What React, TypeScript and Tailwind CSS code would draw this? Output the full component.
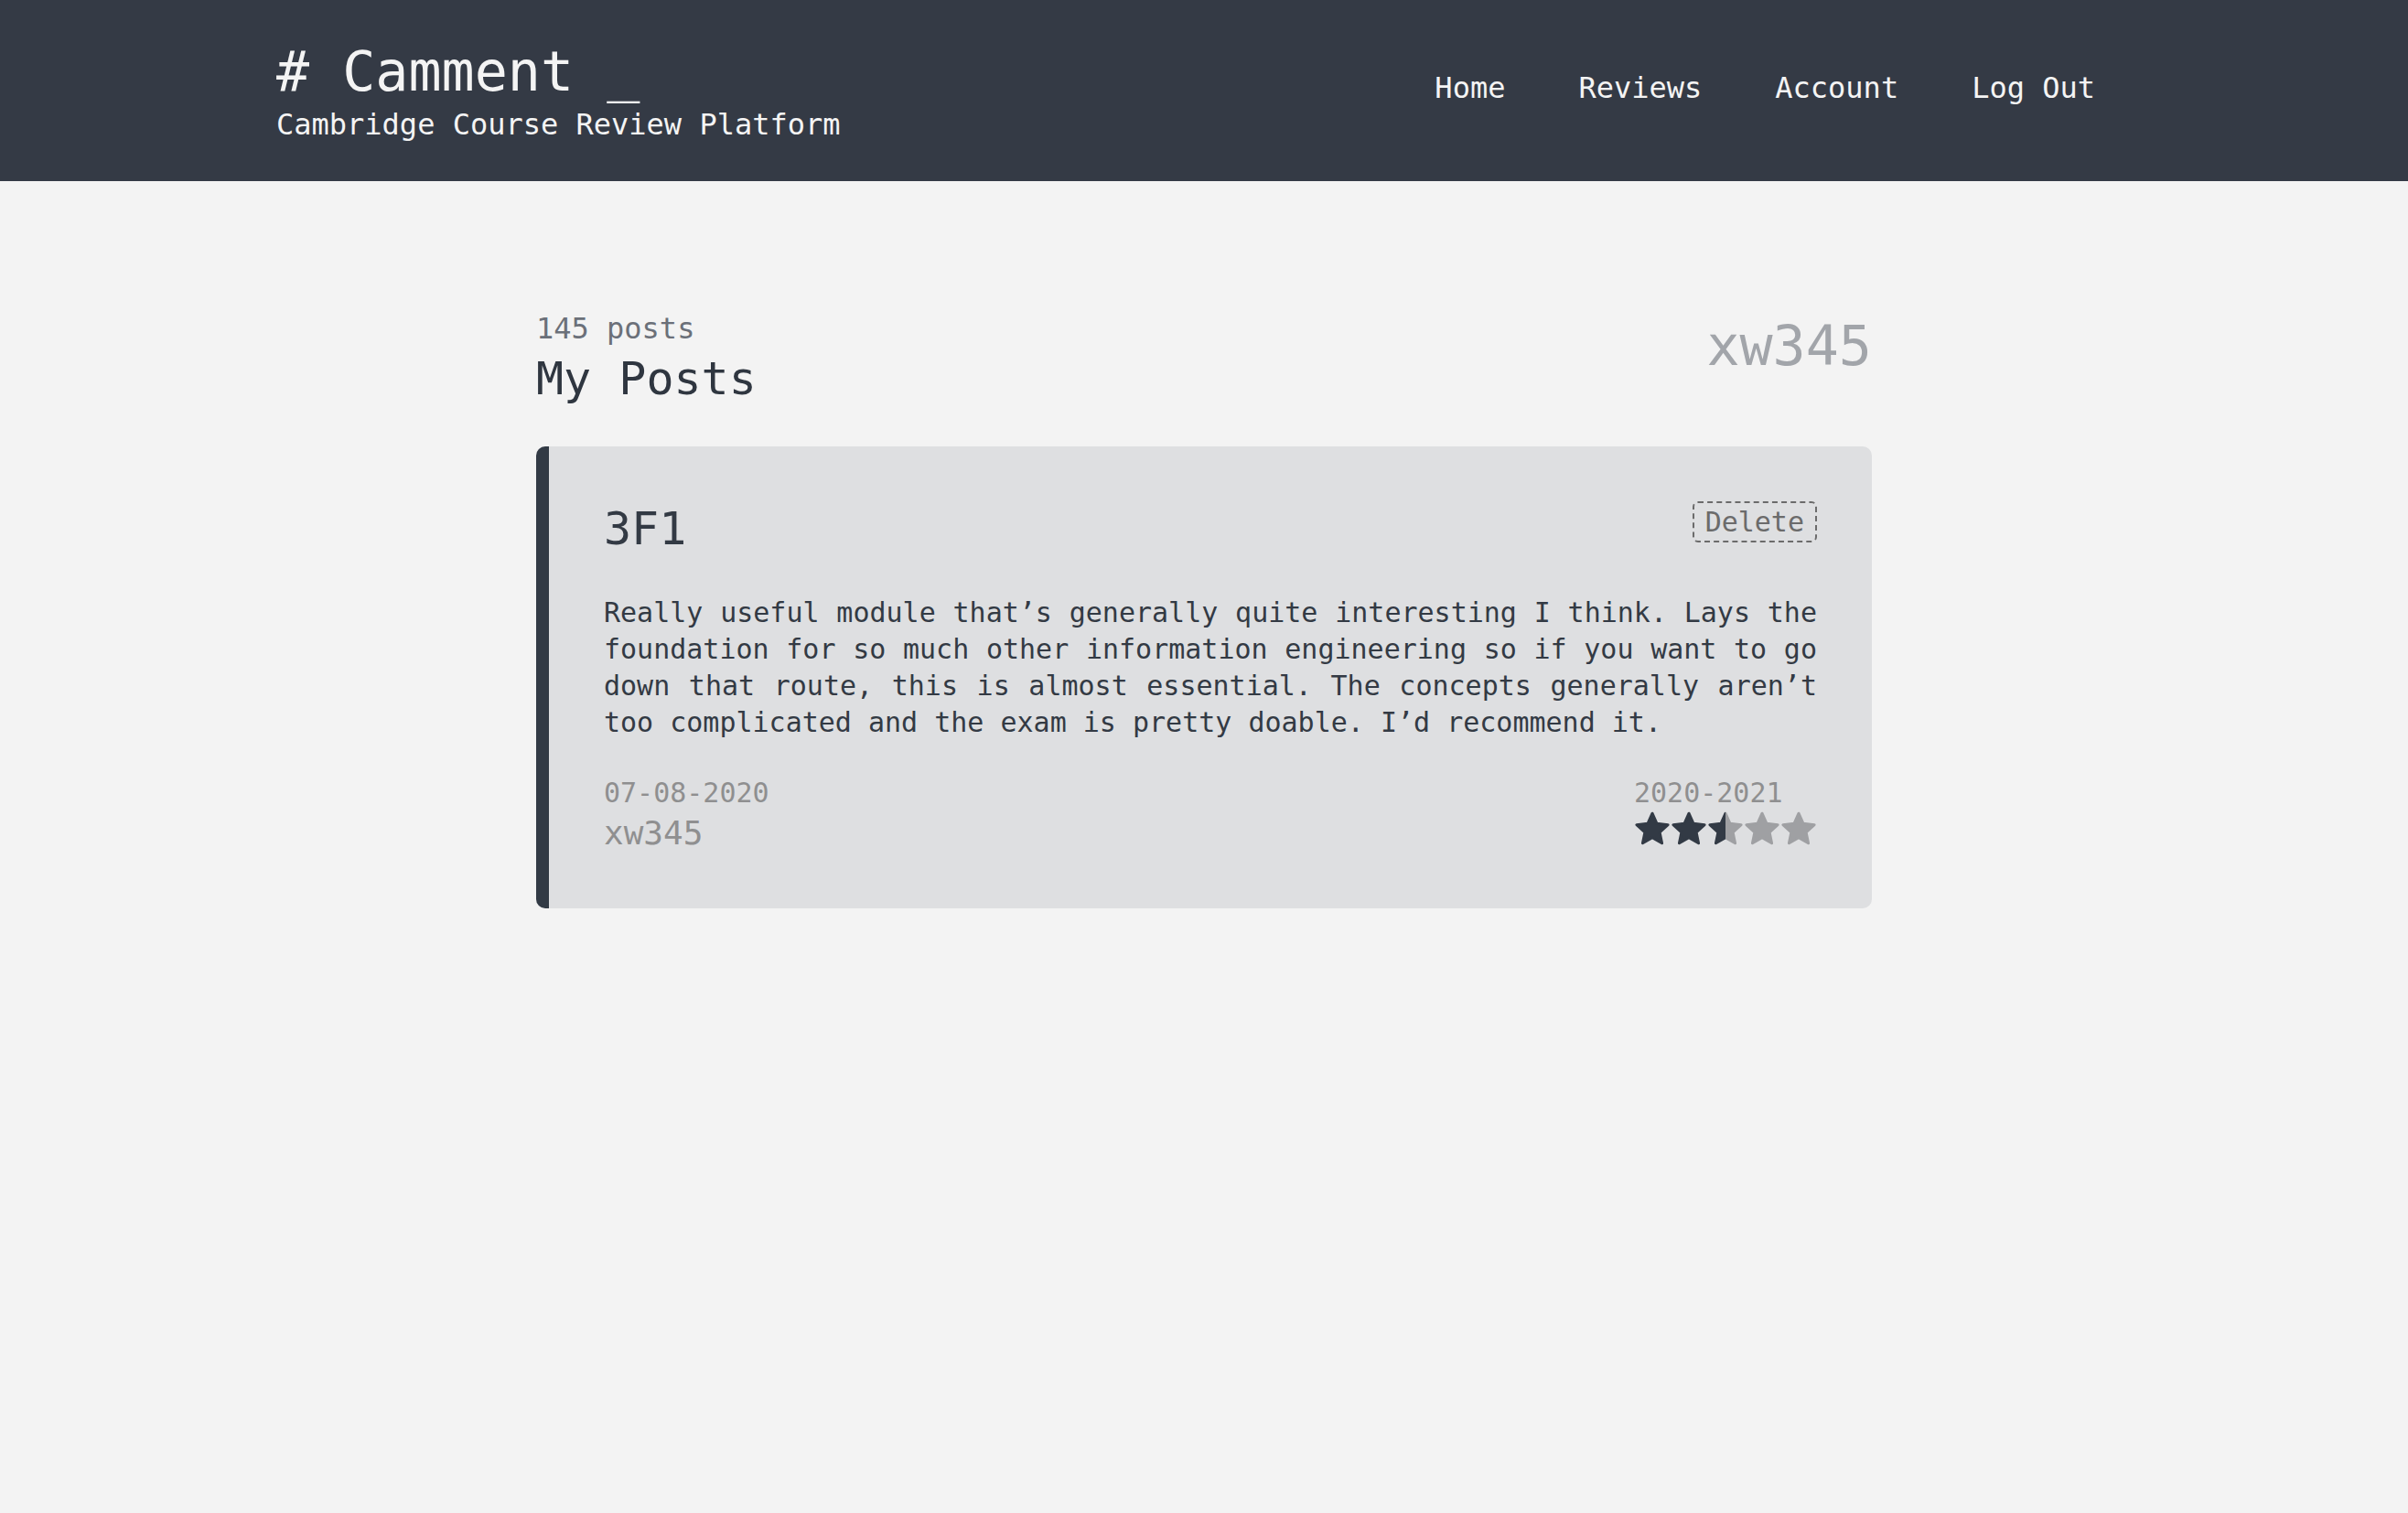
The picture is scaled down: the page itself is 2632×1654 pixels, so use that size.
import React from "react";

const STAR_POINTS =
  "20,2.2 25,13.32 37.12,14.64 28.08,22.83 30.58,34.76 20,28.7 9.42,34.76 11.92,22.83 2.88,14.64 15,13.32";

function Star({ fill, id }: { fill: "full" | "half" | "empty"; id: string }) {
  const dark = "#323a45";
  const light = "#9fa0a3";
  if (fill === "half") {
    return (
      <svg width="40" height="38" viewBox="0 0 40 38">
        <defs>
          <linearGradient id={id} x1="0" y1="0" x2="1" y2="0">
            <stop offset="50%" stopColor={dark} />
            <stop offset="50%" stopColor={light} />
          </linearGradient>
        </defs>
        <polygon
          points={STAR_POINTS}
          fill={`url(#${id})`}
          stroke={`url(#${id})`}
          strokeWidth="3"
          strokeLinejoin="round"
        />
      </svg>
    );
  }
  const c = fill === "full" ? dark : light;
  return (
    <svg width="40" height="38" viewBox="0 0 40 38">
      <polygon points={STAR_POINTS} fill={c} stroke={c} strokeWidth="3" strokeLinejoin="round" />
    </svg>
  );
}

function Rating({ value }: { value: number }) {
  const stars = [0, 1, 2, 3, 4].map((i) => {
    const f: "full" | "half" | "empty" = value >= i + 1 ? "full" : value >= i + 0.5 ? "half" : "empty";
    return <Star key={i} fill={f} id={`star-grad-${i}`} />;
  });
  return <div className="flex">{stars}</div>;
}

export default function App() {
  return (
    <div className="min-h-screen bg-[#f3f3f3] font-['DejaVu_Sans_Mono',monospace]">
      <header className="h-[198px] bg-[#343a45] text-[#f4f4f4]">
        <div className="w-[2028px] mx-auto h-full flex items-start justify-between">
          <div className="pt-[48px]">
            <div className="text-[60px] leading-[60px] whitespace-pre"># Camment _</div>
            <div className="mt-[8px] text-[32px] leading-[40px]">Cambridge Course Review Platform</div>
          </div>
          <nav className="h-full flex items-center pb-[6px] text-[32px] leading-[40px]">
            <a className="px-10">Home</a>
            <a className="px-10">Reviews</a>
            <a className="px-10">Account</a>
            <a className="px-10">Log Out</a>
          </nav>
        </div>
      </header>

      <main className="w-[1460px] mx-auto pt-[141px]">
        <div className="flex items-start justify-between">
          <div>
            <div className="text-[32px] leading-[40px] text-[#6b7079]">145 posts</div>
            <h1 className="mt-[5px] text-[50px] leading-[60px] text-[#2f3640]">My Posts</h1>
          </div>
          <div className="mt-[9px] text-[60px] leading-[60px] text-[#a2a5aa]">xw345</div>
        </div>

        <div className="mt-[44px] flex rounded-[10px] overflow-hidden bg-[#dedfe1]">
          <div className="w-[14px] shrink-0 bg-[#323a45]" />
          <div className="flex-1 px-[60px] pt-[60px] pb-[58px]">
            <div className="flex items-start justify-between">
              <h2 className="text-[50px] leading-[60px] text-[#333a44]">3F1</h2>
              <button className="border-2 border-dashed border-[#6b6b6b] rounded-[6px] px-3 py-[2px] text-[30px] leading-[37px] text-[#6b6b6b]">
                Delete
              </button>
            </div>
            <p className="mt-[42px] text-[30px] leading-[40px] text-[#333a44] text-justify">
              Really useful module that’s generally quite interesting I think. Lays the foundation for so much
              other information engineering so if you want to go down that route, this is almost essential. The
              concepts generally aren’t too complicated and the exam is pretty doable. I’d recommend it.
            </p>
            <div className="mt-[37px] flex items-start justify-between">
              <div>
                <div className="text-[30px] leading-[40px] text-[#8f8f90]">07-08-2020</div>
                <div className="text-[36px] leading-[48px] text-[#8f8f90]">xw345</div>
              </div>
              <div className="w-[200px]">
                <div className="text-[30px] leading-[40px] text-[#8f8f90]">2020-2021</div>
                <Rating value={2.5} />
              </div>
            </div>
          </div>
        </div>
      </main>
    </div>
  );
}
